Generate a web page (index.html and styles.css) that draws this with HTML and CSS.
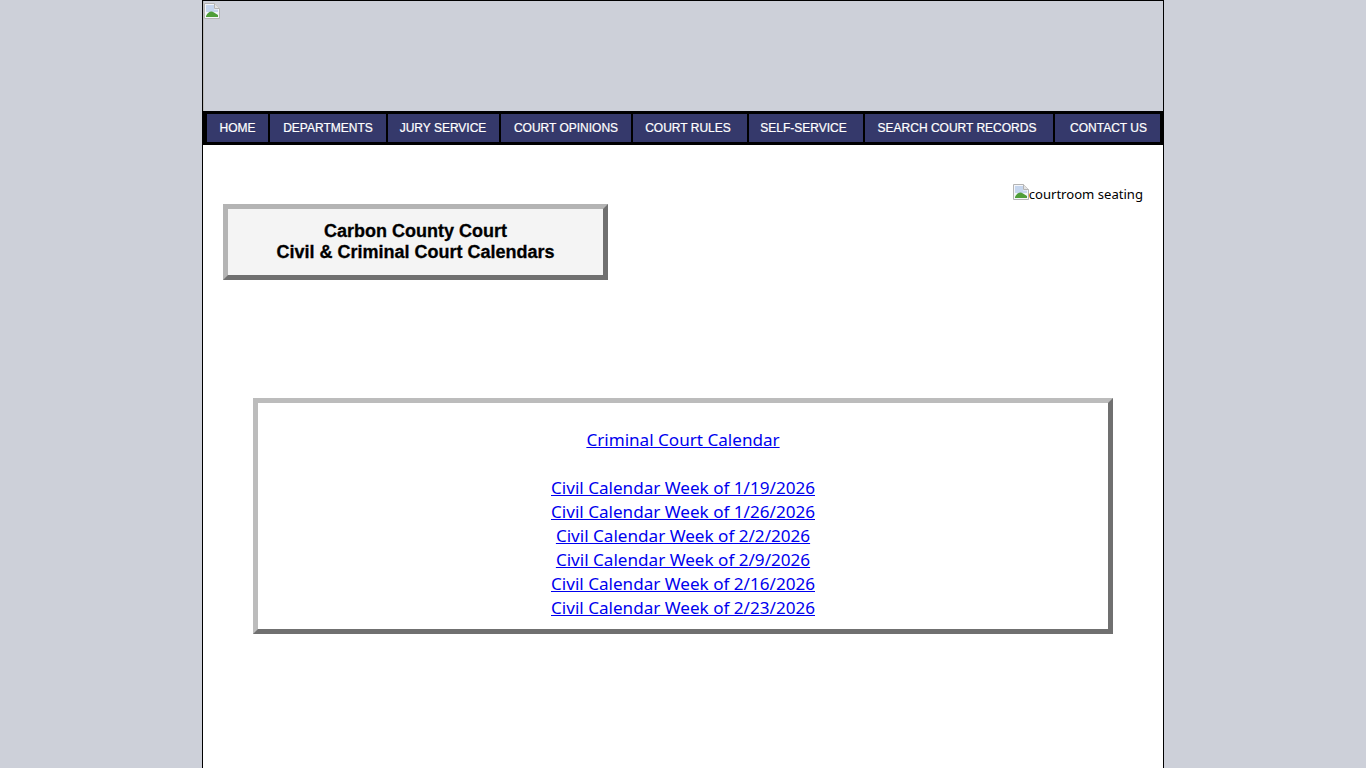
FILE: index.html
```html
<!DOCTYPE html>
<html lang="en">
<head>
<meta charset="utf-8">
<title>Carbon County Court - Civil &amp; Criminal Court Calendars</title>
<link rel="stylesheet" href="styles.css">
</head>
<body>
<div class="page">
  <header class="banner">
    <svg class="broken" width="16" height="16" viewBox="0 0 16 16" aria-hidden="true"><path d="M0.5 0.5H10.5L15.5 5.500V15.500H0.500Z" fill="#f4f6fa" stroke="#b4b4b4"/><path d="M10.500 0.500V5.500H15.500" fill="#e4e4e4" stroke="#b4b4b4"/><path d="M2 2H10V6.500H14V9H2Z" fill="#c6d6ee"/><path d="M2 14V13C4 9 7 7.500 10 9.500L14 12V14Z" fill="#4f9e3a"/></svg>
  </header>
  <nav class="nav">
    <a class="nav-item w-home" href="#">HOME</a>
    <a class="nav-item w-dept" href="#">DEPARTMENTS</a>
    <a class="nav-item w-jury" href="#">JURY SERVICE</a>
    <a class="nav-item w-opin" href="#">COURT OPINIONS</a>
    <a class="nav-item w-rules" href="#">COURT RULES</a>
    <a class="nav-item w-self" href="#">SELF-SERVICE</a>
    <a class="nav-item w-search" href="#">SEARCH COURT RECORDS</a>
    <a class="nav-item w-contact" href="#">CONTACT US</a>
  </nav>
  <main class="content">
    <div class="top-row">
      <h1 class="title">Carbon County Court<br>Civil &amp; Criminal Court Calendars</h1>
      <div class="photo"><svg class="broken" width="16" height="16" viewBox="0 0 16 16" aria-hidden="true"><path d="M0.5 0.5H10.5L15.5 5.500V15.500H0.500Z" fill="#f4f6fa" stroke="#b4b4b4"/><path d="M10.500 0.500V5.500H15.500" fill="#e4e4e4" stroke="#b4b4b4"/><path d="M2 2H10V6.500H14V9H2Z" fill="#c6d6ee"/><path d="M2 14V13C4 9 7 7.500 10 9.500L14 12V14Z" fill="#4f9e3a"/></svg><span>courtroom seating</span></div>
    </div>
    <section class="links">
      <a href="#">Criminal Court Calendar</a>
      <br><br>
      <a href="#">Civil Calendar Week of 1/19/2026</a><br>
      <a href="#">Civil Calendar Week of 1/26/2026</a><br>
      <a href="#">Civil Calendar Week of 2/2/2026</a><br>
      <a href="#">Civil Calendar Week of 2/9/2026</a><br>
      <a href="#">Civil Calendar Week of 2/16/2026</a><br>
      <a href="#">Civil Calendar Week of 2/23/2026</a>
    </section>
  </main>
</div>
</body>
</html>
```
FILE: styles.css
```css
html, body { margin: 0; padding: 0; height: 100%; overflow: hidden; }
body { background: #cdd0d9; font-family: "Noto Sans", sans-serif; color: #000; }
.page { box-sizing: border-box; width: 962px; height: 768px; margin: 0 auto; border: 1px solid #000; border-bottom: 0; background: #fff; }
.banner { height: 110px; padding-top: 2px; background: #cdd0d9; border-left: 1px solid #bbb; box-sizing: border-box; }
.banner .broken { display: block; }
.nav { display: flex; height: 34px; box-sizing: border-box; background: #000; padding: 3px 3px 3px 4px; gap: 2px; }
.nav-item { display: flex; align-items: center; justify-content: center; height: 28px; padding-bottom: 1px; box-sizing: border-box; background: #35396b; color: #fff; font: 12px "Liberation Sans", Arial, sans-serif; -webkit-text-stroke: 0.2px #fff; text-decoration: none; }
.w-home { width: 61px; }
.w-dept { width: 116px; }
.w-jury { width: 111px; padding-right: 1px; }
.w-opin { width: 130px; }
.w-rules { width: 114px; padding-right: 4px; }
.w-self { width: 114px; padding-right: 5px; }
.w-search { width: 188px; padding-right: 4px; }
.w-contact { width: 105px; padding-left: 2px; }
.content { padding: 39px 20px 0; }
.top-row { display: flex; justify-content: space-between; align-items: flex-start; }
.title { box-sizing: border-box; width: 385px; height: 76px; margin: 20px 0 0; border: 5px solid; border-color: #b4b4b4 #707070 #707070 #b4b4b4; background: #f4f4f4; font: bold 18px/21px "Liberation Sans", Arial, sans-serif; -webkit-text-stroke: 0.3px #000; text-align: center; padding-top: 12px; }
.photo { display: flex; align-items: flex-start; font-size: 13.1px; line-height: 20px; }
.links { box-sizing: border-box; width: 860px; height: 236px; margin: 118px auto 0; border: 5px solid; border-color: #bcbcbc #707070 #707070 #bcbcbc; padding-top: 25px; text-align: center; font-size: 17.1px; line-height: 24px; }
.links a { color: #0000ee; }
```
